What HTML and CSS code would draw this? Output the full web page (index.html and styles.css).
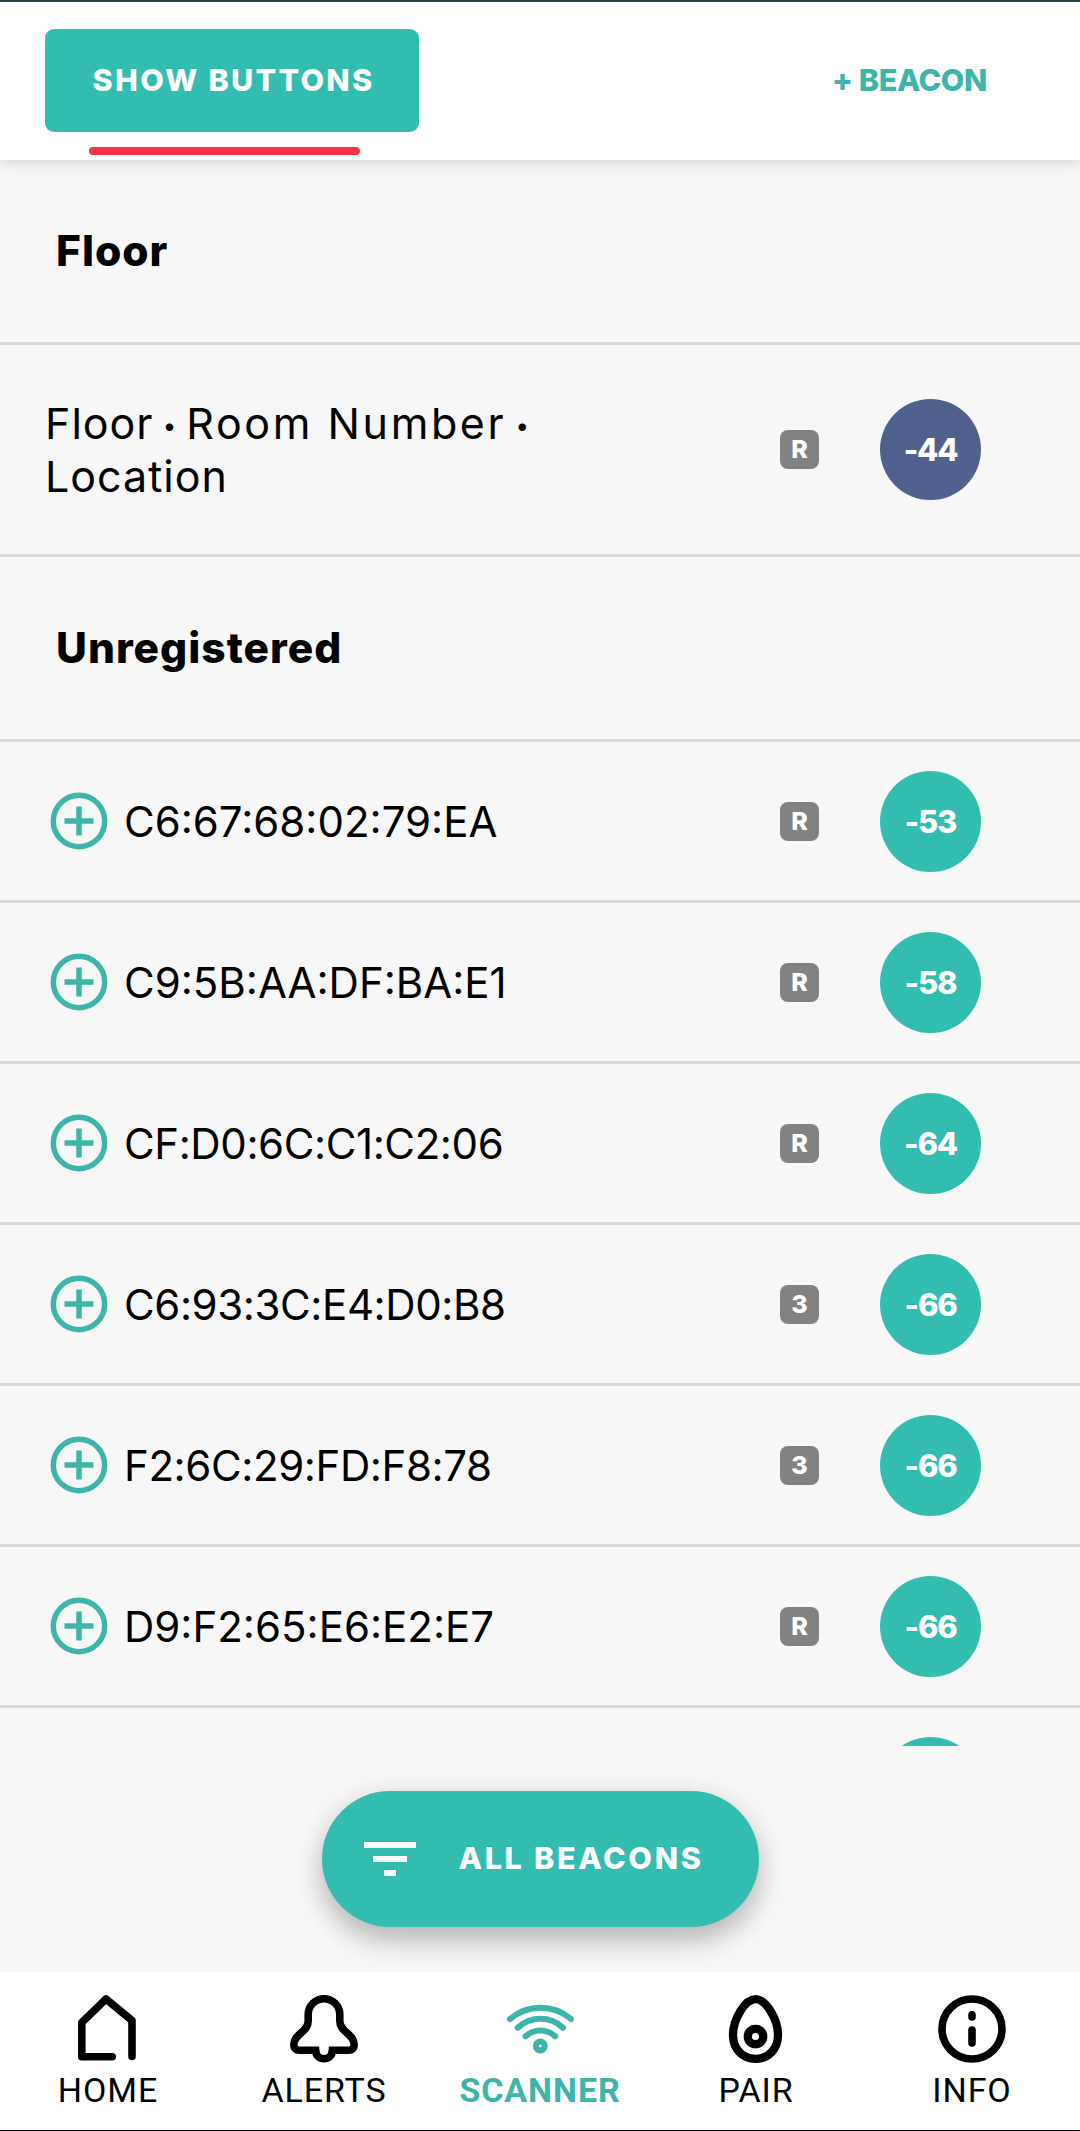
FILE: index.html
```html
<!DOCTYPE html>
<html lang="en">
<head>
  <meta charset="UTF-8">
  <meta name="viewport" content="width=device-width, initial-scale=1.0">
  <title>Scanner</title>
  <link rel="stylesheet" href="styles.css">
</head>
<body>

  <svg class="sprite" width="0" height="0">
    <symbol id="plus" viewBox="0 0 58 58">
      <circle cx="29" cy="29" r="25.7"/>
      <path d="M29 14.5v29M14.5 29h29"/>
    </symbol>
  </svg>

  <header class="topbar">
    <button class="show-btn">SHOW BUTTONS</button>
    <button class="beacon-btn">+ BEACON</button>
    <span class="underline"></span>
  </header>

  <main class="list">
    <h2 class="section-title">Floor</h2>
    <div class="row room">
      <span class="room-name">Floor <span class="dot">•</span> <span class="room-number">Room Number</span> <span class="dot">•</span><br>Location</span>
      <span class="tag">R</span>
      <span class="rssi near">-44</span>
    </div>

    <h2 class="section-title">Unregistered</h2>
    <div class="row">
      <svg class="add"><use href="#plus"/></svg>
      <span class="mac">C6:67:68:02:79:EA</span>
      <span class="tag">R</span>
      <span class="rssi">-53</span>
    </div>
    <div class="row">
      <svg class="add"><use href="#plus"/></svg>
      <span class="mac">C9:5B:AA:DF:BA:E1</span>
      <span class="tag">R</span>
      <span class="rssi">-58</span>
    </div>
    <div class="row">
      <svg class="add"><use href="#plus"/></svg>
      <span class="mac tight">CF:D0:6C:C1:C2:06</span>
      <span class="tag">R</span>
      <span class="rssi">-64</span>
    </div>
    <div class="row">
      <svg class="add"><use href="#plus"/></svg>
      <span class="mac tight">C6:93:3C:E4:D0:B8</span>
      <span class="tag">3</span>
      <span class="rssi">-66</span>
    </div>
    <div class="row">
      <svg class="add"><use href="#plus"/></svg>
      <span class="mac tight">F2:6C:29:FD:F8:78</span>
      <span class="tag">3</span>
      <span class="rssi">-66</span>
    </div>
    <div class="row">
      <svg class="add"><use href="#plus"/></svg>
      <span class="mac">D9:F2:65:E6:E2:E7</span>
      <span class="tag">R</span>
      <span class="rssi">-66</span>
    </div>
    <!-- next row, only its top edge is in view -->
    <div class="row last">
      <span class="rssi"></span>
    </div>
  </main>

  <div class="filter-bar">
    <button class="filter-btn">
      <svg class="filter-icon" viewBox="0 0 52 34">
        <path d="M0 0h52v6H0zM9 14h34v6H9zM20 28h12v6H20z"/>
      </svg>
      <span class="filter-text">ALL BEACONS</span>
    </button>
  </div>

  <nav class="tabs">
    <a class="tab">
      <svg class="icon" viewBox="0 0 68 68" stroke-linecap="round" stroke-linejoin="round">
        <path d="M38.2 61.7H7.8V27.5L32 4 58 25.5V61.5"/>
      </svg>
      <span class="label">HOME</span>
    </a>
    <a class="tab">
      <svg class="icon" viewBox="0 0 68 68">
        <path d="M29.3 55.2H9C6 55.2 3.8 53 3.8 50C3.8 38 18.2 38 18.2 26V19.6a15.8 15.8 0 0 1 31.6 0V26C49.8 38 64.2 38 64.2 50C64.2 53 62 55.2 59 55.2H38.7"/>
        <path d="M25.7 55v1a8.3 7.8 0 0 0 16.6 0v-1"/>
      </svg>
      <span class="label">ALERTS</span>
    </a>
    <a class="tab active">
      <svg class="icon wifi" viewBox="0 0 68 68" stroke-linecap="round">
        <path d="M4 24A47 47 0 0 1 65 24"/>
        <path d="M11.7 32.7A33.4 33.4 0 0 1 57 32.7"/>
        <path d="M19.5 41.3A21.7 21.7 0 0 1 49.3 41.3"/>
        <circle cx="34.3" cy="51" r="4.4"/>
      </svg>
      <span class="label">SCANNER</span>
    </a>
    <a class="tab">
      <svg class="icon egg" viewBox="0 0 68 68">
        <path d="M33.5 4.2C44 4.2 56 24.5 56 40C56 54 46.5 63.8 33.5 63.8C20.5 63.8 11 54 11 40C11 24.5 23 4.2 33.5 4.2Z"/>
        <circle cx="33.5" cy="41.5" r="7.7"/>
      </svg>
      <span class="label">PAIR</span>
    </a>
    <a class="tab">
      <svg class="icon" viewBox="0 0 68 68" stroke-linecap="round">
        <circle cx="34" cy="34" r="30"/>
        <path d="M34 19.7V22M34 35V48"/>
      </svg>
      <span class="label">INFO</span>
    </a>
  </nav>

</body>
</html>
```

FILE: styles.css
```css
* {
  box-sizing: border-box;
}

body {
  margin: 0;
  height: 2131px;
  display: flex;
  flex-direction: column;
  background-color: #f7f7f7;
  color: #000;
  font-family: Inter, "Open Sans", sans-serif;
  overflow: hidden;
}

button {
  font-family: inherit;
  border: none;
  padding: 0;
}

.sprite {
  position: absolute;
}

.topbar {
  position: relative;
  height: 160px;
  flex: none;
  display: flex;
  justify-content: space-between;
  align-items: flex-start;
  padding: 27px 93px 0 45px;
  border-top: 2px solid #2b3f48;
  background-color: #fff;
  box-shadow: 0 2px 14px rgba(0, 0, 0, 0.16);
}

.show-btn {
  width: 374px;
  height: 103px;
  padding: 0 0 2px 3px;
  border-radius: 9px;
  background-color: #33bdb0;
  color: #fff;
  font-size: 30.5px;
  font-weight: 800;
  letter-spacing: 2.3px;
}

.beacon-btn {
  height: 103px;
  padding-bottom: 2px;
  background: none;
  color: #3db5aa;
  font-size: 30.5px;
  font-weight: 800;
  letter-spacing: -0.4px;
}

/* red marker under the button */
.underline {
  position: absolute;
  left: 89px;
  top: 145px;
  width: 271px;
  height: 8px;
  border-radius: 4px;
  background-color: #fd3044;
}

.list {
  height: 1586px;
  flex: none;
  overflow: hidden;
}

.section-title {
  height: 185px;
  margin: 0;
  padding-left: 56px;
  border-bottom: 3px solid #d8d8d8;
  font-size: 42.5px;
  font-weight: 800;
  line-height: 182px;
  letter-spacing: 1px;
}

.row {
  height: 161px;
  display: flex;
  align-items: center;
  padding: 0 99px 0 50px;
  border-bottom: 3px solid #d8d8d8;
}

.room {
  height: 212px;
  padding-left: 45px;
}

.last {
  border: none;
  height: 158px;
}

.room-name {
  font-size: 43px;
  line-height: 53px;
  letter-spacing: 1px;
  white-space: nowrap;
}

.room-number {
  letter-spacing: 2.6px;
}

.dot {
  margin: 0 -4px;
  font-size: 24px;
  line-height: 1;
  vertical-align: 5px;
}

.add {
  width: 58px;
  height: 58px;
  fill: none;
  stroke: #3db5aa;
  stroke-width: 5.5px;
}

.mac {
  padding-left: 16px;
  font-size: 42px;
  letter-spacing: 0;
}

.tight {
  letter-spacing: -0.4px;
}

.tag {
  width: 39px;
  height: 39px;
  margin-left: auto;
  border-radius: 8px;
  background-color: #828282;
  color: #fff;
  font-size: 25px;
  font-weight: 800;
  line-height: 39px;
  text-align: center;
}

.rssi {
  width: 101px;
  height: 101px;
  margin-left: 61px;
  border-radius: 50%;
  background-color: #33bdb0;
  color: #fff;
  font-size: 31px;
  font-weight: 800;
  line-height: 101px;
  letter-spacing: -1.2px;
  text-align: center;
}

.last .rssi {
  margin-left: auto;
}

.near {
  background-color: #4f618c;
}

.filter-bar {
  height: 226px;
  flex: none;
  display: flex;
  justify-content: center;
  align-items: flex-start;
  padding-top: 45px;
}

.filter-btn {
  width: 437px;
  height: 136px;
  display: flex;
  align-items: center;
  gap: 43px;
  padding-left: 42px;
  border-radius: 68px;
  background-color: #33bdb0;
  color: #fff;
  box-shadow: 0 14px 28px rgba(0, 0, 0, 0.24), 0 2px 30px rgba(0, 0, 0, 0.06);
}

.filter-icon {
  width: 52px;
  height: 34px;
  fill: #fff;
}

.filter-text {
  padding-bottom: 3px;
  font-size: 30.5px;
  font-weight: 800;
  letter-spacing: 2.7px;
}

.tabs {
  position: relative;
  height: 159px;
  flex: none;
  display: grid;
  grid-template-columns: repeat(5, 1fr);
  background-color: #fff;
  border-bottom: 1px solid #000;
}

.tab {
  display: flex;
  flex-direction: column;
  align-items: center;
  padding-top: 23px;
  font-family: Roboto, sans-serif;
  font-size: 34px;
}

.icon {
  width: 68px;
  height: 68px;
  fill: none;
  stroke: #000;
  stroke-width: 7.6px;
}

.egg {
  stroke-width: 8.3px;
}

.wifi {
  stroke: #3db5aa;
  stroke-width: 6px;
}

.label {
  margin-top: 7px;
  line-height: 40px;
  letter-spacing: 0.9px;
}

.active .label {
  color: #3db5aa;
  font-weight: 700;
}
```
